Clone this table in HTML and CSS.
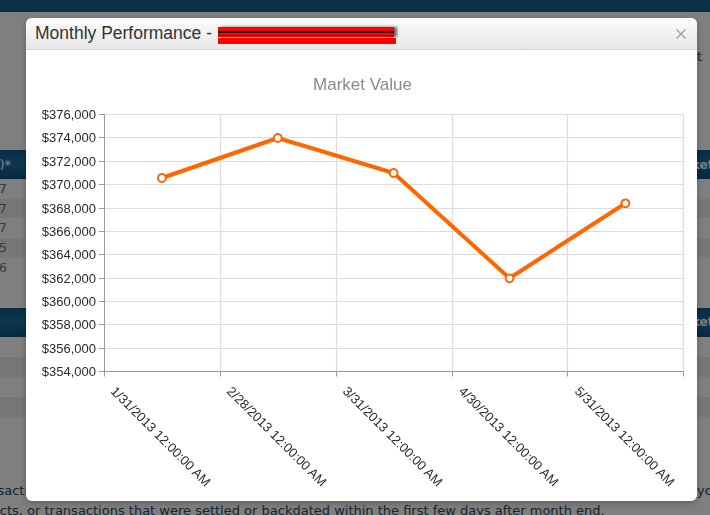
FILE: index.html
```html
<!DOCTYPE html>
<html lang="en">
<head>
<meta charset="utf-8">
<title>Monthly Performance</title>
<link rel="stylesheet" href="styles.css">
</head>
<body>
<div class="page">
  <div class="topbar"></div>
  <div class="toolbar"><a class="export">Export</a></div>

  <section class="holdings h1">
    <div class="thead"><span class="cell-l">(000)*</span><span class="cell-r">Market Value</span></div>
    <div class="row"><span class="cell-l">1,237</span><span class="cell-r"></span></div>
    <div class="row"><span class="cell-l">2,847</span><span class="cell-r"></span></div>
    <div class="row"><span class="cell-l">3,117</span><span class="cell-r"></span></div>
    <div class="row"><span class="cell-l">1,915</span><span class="cell-r"></span></div>
    <div class="row"><span class="cell-l">4,206</span><span class="cell-r"></span></div>
  </section>

  <section class="holdings h2">
    <div class="thead"><span class="cell-l"></span><span class="cell-r">Market Value</span></div>
    <div class="row"><span class="cell-l"></span><span class="cell-r"></span></div>
    <div class="row"><span class="cell-l"></span><span class="cell-r"></span></div>
    <div class="row"><span class="cell-l"></span><span class="cell-r"></span></div>
    <div class="row"><span class="cell-l"></span><span class="cell-r"></span></div>
  </section>

  <div class="notes">
    <p class="note1"><span class="lead"><span>Values do not include pending transactions</span></span><span class="tail">you may</span></p>
    <p class="note2">contracts, or transactions that were settled or backdated within the first few days after month end.</p>
  </div>
</div>

<div class="overlay"></div>

<div class="modal">
  <div class="modal-head">
    <div class="modal-title">Monthly Performance - <span class="redact"><span class="redact-top"></span><span class="redact-bottom"></span></span></div>
    <svg class="close" width="10" height="10" viewBox="0 0 10 10"><path d="M0.5 0.5 L9.5 9.5 M9.5 0.5 L0.5 9.5" stroke="#9c9c9c" stroke-width="1.2" fill="none"/></svg>
  </div>
  <svg class="chart" width="671" height="451" viewBox="26 50 671 451">
    <text class="chart-title" x="362.5" y="90" text-anchor="middle">Market Value</text>
    <g class="grid" stroke="#dcdcdc" stroke-width="1.2">
      <path d="M104 114.5H683.5 M104 137.5H683.5 M104 161.5H683.5 M104 184.5H683.5 M104 208.5H683.5 M104 231.5H683.5 M104 254.5H683.5 M104 278.5H683.5 M104 301.5H683.5 M104 324.5H683.5 M104 348.5H683.5"/>
      <path d="M220.5 114.5V371.5 M336.5 114.5V371.5 M452.5 114.5V371.5 M567.5 114.5V371.5 M683.5 114.5V371.5"/>
    </g>
    <g class="axes" stroke="#9a9a9a" stroke-width="1" fill="none">
      <path d="M104.5 114V376.5"/>
      <path d="M104 371.5H684"/>
      <path d="M99 114.5H104.5 M99 137.5H104.5 M99 161.5H104.5 M99 184.5H104.5 M99 208.5H104.5 M99 231.5H104.5 M99 254.5H104.5 M99 278.5H104.5 M99 301.5H104.5 M99 324.5H104.5 M99 348.5H104.5 M99 371.5H104.5"/>
      <path d="M220.5 371.5V376.5 M336.5 371.5V376.5 M452.5 371.5V376.5 M567.5 371.5V376.5 M683.5 371.5V376.5"/>
    </g>
    <g class="ylabels" text-anchor="end">
      <text x="96" y="119">$376,000</text>
      <text x="96" y="142">$374,000</text>
      <text x="96" y="166">$372,000</text>
      <text x="96" y="189">$370,000</text>
      <text x="96" y="213">$368,000</text>
      <text x="96" y="236">$366,000</text>
      <text x="96" y="259">$364,000</text>
      <text x="96" y="283">$362,000</text>
      <text x="96" y="306">$360,000</text>
      <text x="96" y="329">$358,000</text>
      <text x="96" y="353">$356,000</text>
      <text x="96" y="376">$354,000</text>
    </g>
    <g class="xlabels">
      <text x="110" y="392" transform="rotate(45 110 392)">1/31/2013 12:00:00 AM</text>
      <text x="226" y="392" transform="rotate(45 226 392)">2/28/2013 12:00:00 AM</text>
      <text x="342" y="392" transform="rotate(45 342 392)">3/31/2013 12:00:00 AM</text>
      <text x="458" y="392" transform="rotate(45 458 392)">4/30/2013 12:00:00 AM</text>
      <text x="574" y="392" transform="rotate(45 574 392)">5/31/2013 12:00:00 AM</text>
    </g>
    <polyline class="series" points="161.9,178 277.8,138 393.6,173 509.5,278.3 625.4,203.3"/>
    <g class="markers">
      <circle cx="161.9" cy="178" r="3.9"/>
      <circle cx="277.8" cy="138" r="3.9"/>
      <circle cx="393.6" cy="173" r="3.9"/>
      <circle cx="509.5" cy="278.3" r="3.9"/>
      <circle cx="625.4" cy="203.3" r="3.9"/>
    </g>
  </svg>
</div>
</body>
</html>
```

FILE: styles.css
```css
* { box-sizing: border-box; }

html, body {
  margin: 0;
  width: 710px;
  height: 515px;
}

body {
  font-family: "DejaVu Sans", Verdana, sans-serif;
  font-size: 13px;
  color: #2e4a62;
  background: #ffffff;
  overflow: hidden;
  position: relative;
}

p { margin: 0; }

/* ---------- background page ---------- */
.page {
  display: flex;
  flex-direction: column;
}

.topbar {
  height: 12px;
  background: #14648f;
}

.toolbar {
  margin-top: 36px;
  height: 18px;
  line-height: 18px;
  display: flex;
  justify-content: flex-end;
  padding-right: 8px;
}

.export {
  color: #2a5070;
}

.holdings {
  display: flex;
  flex-direction: column;
}

.h1 { margin-top: 84px; }
.h2 { margin-top: 31px; }

.thead,
.row {
  display: flex;
  justify-content: space-between;
  align-items: center;
  white-space: nowrap;
}

.thead {
  height: 29px;
  background: linear-gradient(#0e5b8a, #186ea3 50%, #0c5180);
  color: #ffffff;
}

.row {
  height: 19.6px;
  color: #777777;
}

.h2 .row { height: 20px; }

.row:nth-child(odd) { background: #eeeeee; }

.cell-l {
  width: 12px;
  display: flex;
  justify-content: flex-end;
  padding-right: 5px;
}

.thead .cell-l { padding-right: 1px; }

.cell-r {
  width: 44px;
  font-weight: bold;
  font-size: 12px;
}

.notes {
  margin-top: 64px;
  line-height: 20px;
}

.note1 {
  display: flex;
  justify-content: space-between;
  white-space: nowrap;
}

.note1 .lead {
  width: 51px;
  display: flex;
  justify-content: flex-end;
}

.note1 .tail { width: 13px; }

.note2 {
  white-space: nowrap;
  text-indent: -42px;
}

/* ---------- overlay + modal ---------- */
.overlay {
  position: fixed;
  inset: 0;
  background: rgba(0, 0, 0, 0.5);
}

.modal {
  position: absolute;
  left: 26px;
  top: 18px;
  width: 671px;
  height: 483px;
  background: #ffffff;
  border-radius: 6px;
  overflow: hidden;
  display: flex;
  flex-direction: column;
  box-shadow: 0 2px 6px rgba(0, 0, 0, 0.25);
  font-family: "Liberation Sans", Arial, sans-serif;
}

.modal-head {
  flex: none;
  height: 32px;
  display: flex;
  align-items: center;
  padding: 0 11px 0 9px;
  background: linear-gradient(#fbfbfb, #e8e8e8);
  border-bottom: 1px solid #d2d2d2;
}

.modal-title {
  font-size: 17.5px;
  color: #333333;
  display: flex;
  align-items: center;
  white-space: pre;
}

.redact {
  display: inline-flex;
  flex-direction: column;
  width: 178px;
  margin-top: 3px;
  margin-left: 1px;
}

.redact-top {
  height: 10px;
  width: 176px;
  background: linear-gradient(#ff0000 0, #ff0000 4.5px, #2a0000 4.5px, #2a0000 5.8px, #ff0000 5.8px, #ff0000 8px, #3a0000 8px, #3a0000 9px, #ff0000 9px);
  box-shadow: 3px 0 3px rgba(0, 0, 0, 0.6);
}

.redact-bottom {
  height: 6px;
  margin-top: 1px;
  background: #ff0000;
}

.close {
  margin-left: auto;
  flex: none;
}

.chart {
  display: block;
  flex: none;
}

.chart-title {
  font-size: 17px;
  fill: #8a8a8a;
}

.ylabels text,
.xlabels text {
  font-size: 13px;
  fill: #2a2a2a;
}

.series {
  fill: none;
  stroke: #ff6600;
  stroke-width: 4;
  stroke-linejoin: round;
  stroke-linecap: round;
}

.markers circle {
  fill: #ffffff;
  stroke: #ff6600;
  stroke-width: 2;
}
```
